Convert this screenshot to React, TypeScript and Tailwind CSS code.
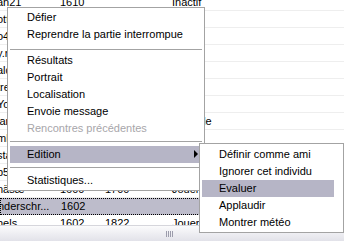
import React from 'react'

type Row = { name: string; elo: string; best: string; state: string; selected?: boolean }

const rows: Row[] = [
  { name: 'an21', elo: '1610', best: '', state: 'Inactif' },
  { name: 'otto_b', elo: '1588', best: '1640', state: 'Jouer' },
  { name: 'o4ever', elo: '1575', best: '1602', state: 'Inactif' },
  { name: 'y.nox', elo: '1571', best: '', state: 'Jouer' },
  { name: 'aldo', elo: '1566', best: '1700', state: 'Inactif' },
  { name: 'tremor', elo: '1560', best: '1611', state: 'Inactif' },
  { name: 'Yoshi', elo: '1552', best: '', state: 'Inactif' },
  { name: 'iannis', elo: '1549', best: '1580', state: 'Invisible' },
  { name: 'mlotte', elo: '1540', best: '', state: 'Jouer' },
  { name: 'stan', elo: '1533', best: '1590', state: 'Jouer' },
  { name: 'b52', elo: '1621', best: '', state: 'Jouer' },
  { name: 'näsæ', elo: '1600', best: '1700', state: 'Jouer' },
  { name: 'nderschr...', elo: '1602', best: '', state: '', selected: true },
  { name: 'hels', elo: '1602', best: '1822', state: 'Jouer' },
]

type Item = { label: string; disabled?: boolean; active?: boolean; sub?: boolean }

// null = separator, number = line offset inside the 9px separator
const mainItems: (string | number | Item)[] = [
  'Défier',
  'Reprendre la partie interrompue',
  6,
  'Résultats',
  'Portrait',
  'Localisation',
  'Envoie message',
  { label: 'Rencontres précédentes', disabled: true },
  4,
  { label: 'Edition', active: true, sub: true },
  4,
  'Statistiques...',
]

const subItems = ['Définir comme ami', 'Ignorer cet individu', 'Evaluer', 'Applaudir', 'Montrer météo']

export default function App() {
  return (
    <div className="relative w-[344px] h-[241px] overflow-hidden bg-white text-[11px] leading-none text-black font-['Liberation_Sans',Arial,sans-serif]">
      {/* ── Background list ── */}
      <div className="flex flex-col h-full">
        <div className="flex-1 overflow-hidden">
          <div className="-mt-[6px]">
            {rows.map((r, i) => (
              <div
                key={i}
                className={
                  r.selected
                    ? 'h-[17px] flex items-center bg-[#bdbccb] border border-dotted border-black'
                    : 'h-[17px] flex items-center border-b border-[#eeeeee]'
                }
              >
                <div className="w-[63px] -ml-[3px] shrink-0 whitespace-nowrap">{r.name}</div>
                <div className="w-[45px] shrink-0">{r.elo}</div>
                <div className="w-[70px] shrink-0">{r.best}</div>
                <div className="whitespace-nowrap -ml-[3px]">{r.state}</div>
              </div>
            ))}
          </div>
        </div>
        {/* horizontal scrollbar */}
        <div className="h-[16px] shrink-0 border-t border-[#d6d6dc] bg-gradient-to-b from-[#fbfbfc] to-[#e2e2e9] flex items-center justify-center">
          <div className="flex gap-[1px] ml-[-6px]">
            {[0, 1, 2, 3].map(k => (
              <div key={k} className="w-px h-[6px] bg-[#9c9cab]" />
            ))}
          </div>
        </div>
      </div>

      {/* ── Context menu ── */}
      <div className="absolute left-[7px] top-[7px] w-[198px] border border-[#a3a3a3] bg-white py-[1px]">
        {mainItems.map((it, i) => {
          if (typeof it === 'number') {
            return (
              <div key={i} className={'h-[9px] mx-[2px] ' + (it === 6 ? 'pt-[6px]' : 'pt-[4px]')}>
                <div className="h-px bg-[#a3a3a3]" />
              </div>
            )
          }
          const item: Item = typeof it === 'string' ? { label: it } : it
          return (
            <div
              key={i}
              className={
                'relative h-[17px] mx-[2px] pl-[17px] flex items-center whitespace-nowrap ' +
                (item.active ? 'bg-[#b6b5c6] ' : '') +
                (item.disabled ? 'text-[#a7a6aa]' : '')
              }
            >
              {item.label}
              {item.sub && (
                <span className="absolute right-[4px] top-[4px] w-0 h-0 border-y-[4px] border-y-transparent border-l-[4px] border-l-black" />
              )}
            </div>
          )
        })}
      </div>

      {/* ── Submenu ── */}
      <div className="absolute left-[199px] top-[143px] w-[145px] h-[90px] border border-[#a3a3a3] bg-white pt-[2px]">
        {subItems.map(label => (
          <div
            key={label}
            className={
              'h-[17px] ml-[2px] mr-[9px] pl-[17px] flex items-center whitespace-nowrap ' +
              (label === 'Evaluer' ? 'bg-[#b6b5c6]' : '')
            }
          >
            {label}
          </div>
        ))}
      </div>
    </div>
  )
}
